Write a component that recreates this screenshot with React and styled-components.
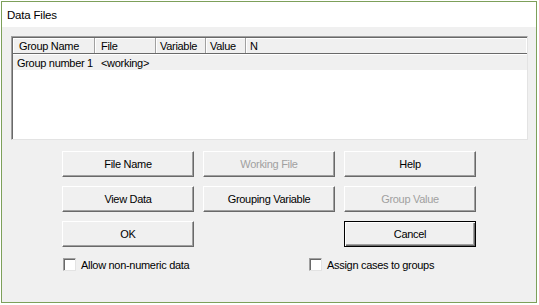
import styled, { createGlobalStyle } from 'styled-components';

const Global = createGlobalStyle`
  body {
    margin: 0;
    background: #ffffff;
    font-family: "Liberation Sans", Arial, sans-serif;
    font-size: 11px;
    letter-spacing: -0.3px;
    color: #000;
  }
`;

const Page = styled.div`
  padding: 1px 0 0 1px;
`;

const Window = styled.div`
  width: 534px;
  height: 300px;
  border: 1px solid #7da05a;
  display: flex;
  flex-direction: column;
`;

const TitleBar = styled.div`
  height: 25px;
  background: #ffffff;
  display: flex;
  align-items: center;
  padding-left: 5px;
  font-size: 11.5px;
  letter-spacing: -0.2px;
`;

const Client = styled.div`
  flex: 1;
  background: #f0f0f0;
  padding: 9px 0 0 9px;
`;

const ListOuter = styled.div`
  width: 515px;
  height: 102px;
  border-top: 1px solid #a0a0a0;
  border-left: 1px solid #a0a0a0;
  border-right: 1px solid #e3e3e3;
  border-bottom: 1px solid #e3e3e3;
`;

const ListInner = styled.div`
  height: 100%;
  box-sizing: border-box;
  border-top: 1px solid #696969;
  border-left: 1px solid #696969;
  background: #ffffff;
`;

const Header = styled.div`
  display: flex;
  height: 15px;
  background: #f0f0f0;
  border-bottom: 1px solid #696969;
  border-right: 1px solid #696969;
  box-shadow: inset 1px 1px 0 #ffffff;
`;

const HeadCell = styled.div`
  width: ${p => p.$w};
  flex: ${p => (p.$grow ? 1 : 'none')};
  box-sizing: border-box;
  padding-left: ${p => p.$pad || 5}px;
  display: flex;
  align-items: center;
  border-right: ${p => (p.$grow ? 'none' : '1px solid #a0a0a0')};
  box-shadow: 1px 0 0 #ffffff;
`;

const Row = styled.div`
  display: flex;
  height: 15px;
  margin-top: 1px;
  background: #f0f0f0;
  align-items: center;
`;

const Cell = styled.div`
  width: ${p => p.$w};
  box-sizing: border-box;
  padding-left: ${p => p.$pad}px;
  white-space: nowrap;
`;

const Buttons = styled.div`
  display: grid;
  grid-template-columns: repeat(3, 132px);
  grid-auto-rows: 26px;
  column-gap: 9px;
  row-gap: 9px;
  margin: 11px 0 0 51px;
`;

const Button = styled.button`
  font-family: "Liberation Sans", Arial, sans-serif;
  font-size: 11px;
  letter-spacing: -0.3px;
  color: ${p => (p.disabled ? '#a0a0a0' : '#000')};
  background: #f0f0f0;
  padding: 0;
  box-sizing: border-box;
  border-style: solid;
  border-width: 1px;
  border-color: ${p => (p.$default ? '#000' : '#ffffff #696969 #696969 #ffffff')};
  box-shadow: ${p =>
    p.$default
      ? 'inset 1px 1px 0 #ffffff, inset -1px -1px 0 #696969, inset -2px -2px 0 #a0a0a0'
      : 'inset -1px -1px 0 #a0a0a0'};
`;

const Checks = styled.div`
  display: flex;
  margin: 11px 0 0 52px;
`;

const Check = styled.label`
  display: flex;
  align-items: center;
  gap: 5px;
  width: ${p => p.$w};
`;

const Box = styled.span`
  width: 11px;
  height: 11px;
  background: #ffffff;
  border-top: 1px solid #a0a0a0;
  border-left: 1px solid #a0a0a0;
  border-right: 1px solid #e3e3e3;
  border-bottom: 1px solid #e3e3e3;
  box-shadow: inset 1px 1px 0 #696969;
`;

const columns = [
  { name: 'Group Name', w: '82px', pad: 6 },
  { name: 'File', w: '61px', pad: 6 },
  { name: 'Variable', w: '50px', pad: 4 },
  { name: 'Value', w: '40px', pad: 4 },
];

export default function App() {
  return (
    <Page>
      <Global />
      <Window>
        <TitleBar>Data Files</TitleBar>
        <Client>
          <ListOuter>
            <ListInner>
              <Header>
                {columns.map(c => (
                  <HeadCell key={c.name} $w={c.w} $pad={c.pad}>{c.name}</HeadCell>
                ))}
                <HeadCell $grow $pad={4}>N</HeadCell>
              </Header>
              <Row>
                <Cell $w="82px" $pad={4}>Group number 1</Cell>
                <Cell $w="100px" $pad={6}>&lt;working&gt;</Cell>
              </Row>
            </ListInner>
          </ListOuter>
          <Buttons>
            <Button>File Name</Button>
            <Button disabled>Working File</Button>
            <Button>Help</Button>
            <Button>View Data</Button>
            <Button>Grouping Variable</Button>
            <Button disabled>Group Value</Button>
            <Button>OK</Button>
            <span />
            <Button $default>Cancel</Button>
          </Buttons>
          <Checks>
            <Check $w="246px"><Box />Allow non-numeric data</Check>
            <Check><Box />Assign cases to groups</Check>
          </Checks>
        </Client>
      </Window>
    </Page>
  );
}
